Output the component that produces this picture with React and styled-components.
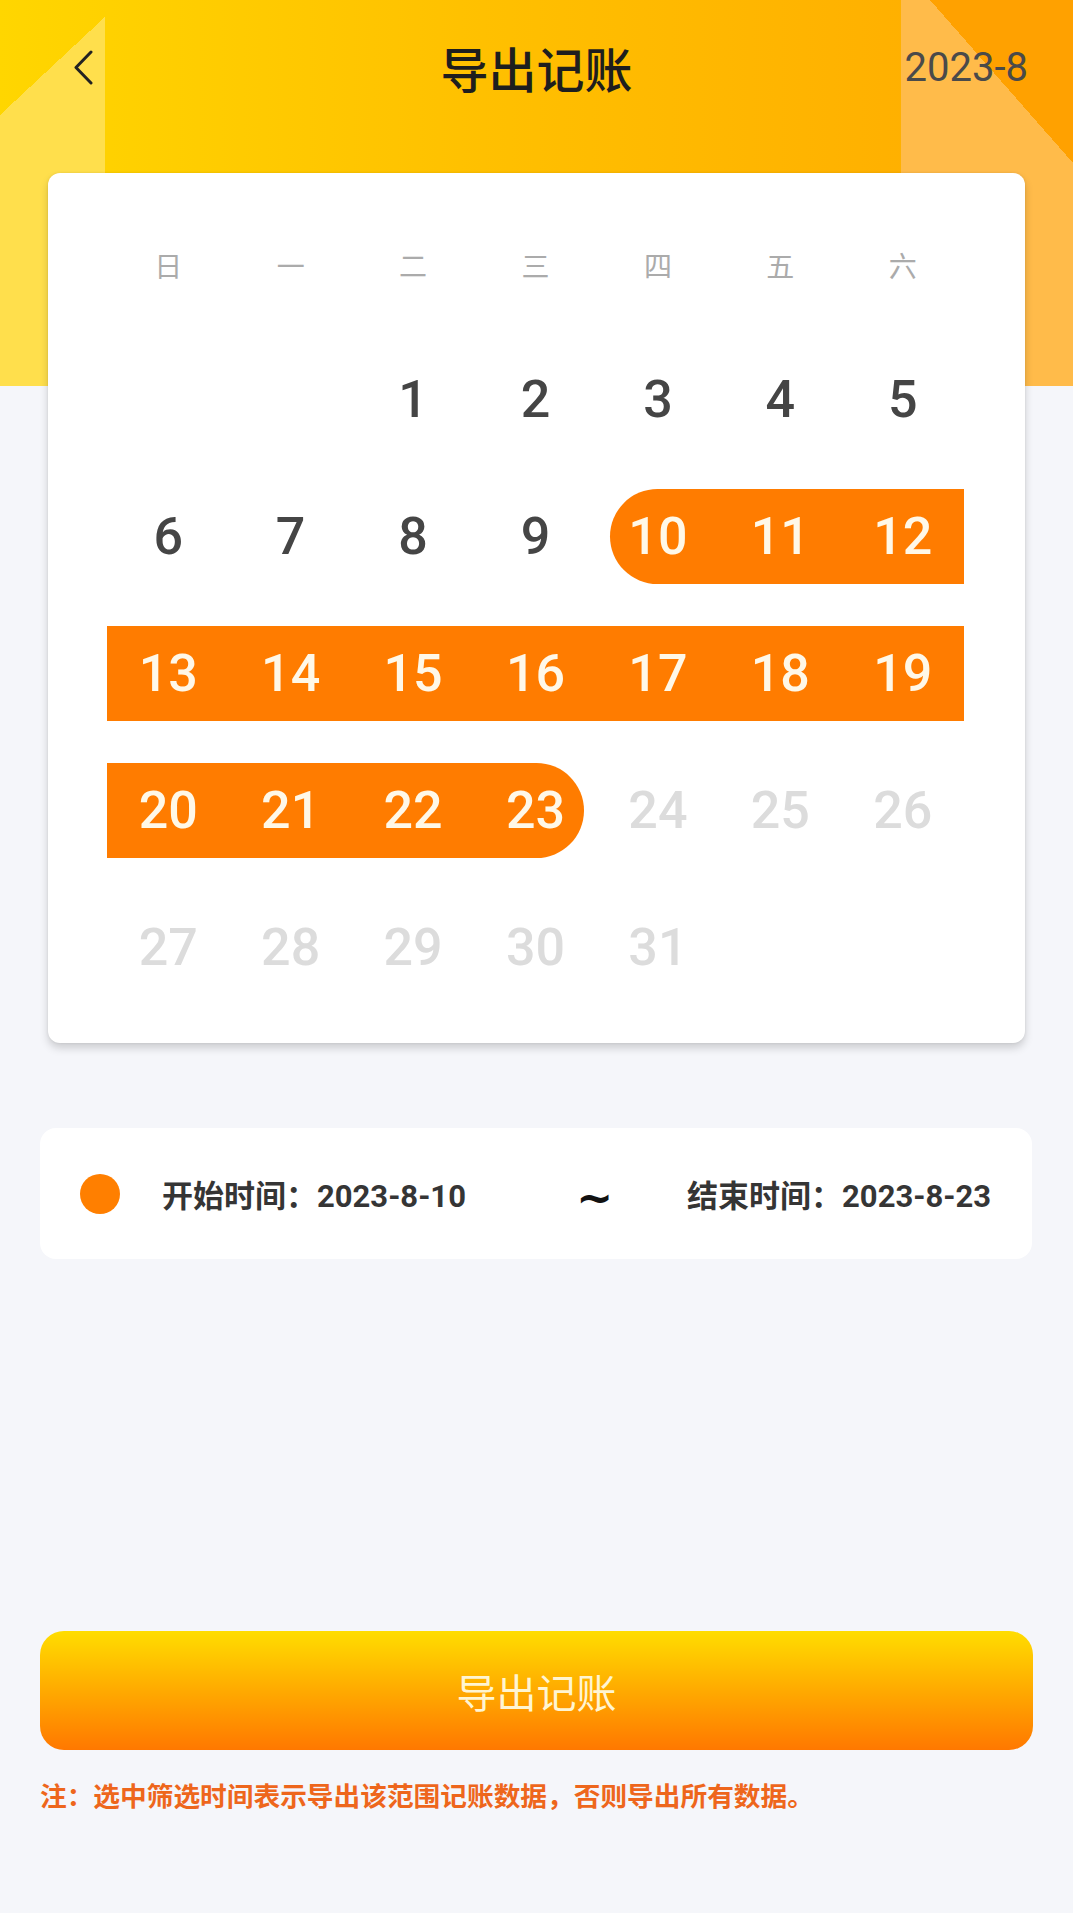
import React from 'react';
import styled, { createGlobalStyle } from 'styled-components';

const GlobalStyle = createGlobalStyle`
  html, body {
    margin: 0;
    padding: 0;
    background: #f5f6fa;
  }
  body {
    font-family: Roboto, "Noto Sans CJK SC", sans-serif;
  }
  * {
    box-sizing: border-box;
  }
`;

const Screen = styled.div`
  min-height: 1913px;
  padding-bottom: 60px;
  background:
    linear-gradient(to top right, transparent 50%, #ffa100 50%) right 0 top 0 / 143px 163px no-repeat,
    linear-gradient(#ffbb4a, #ffbb4a) right 0 top 0 / 172px 386px no-repeat,
    linear-gradient(to bottom right, transparent 50%, #ffdf4c 50%) 0 17px / 105px 98px no-repeat,
    linear-gradient(#ffdf4c, #ffdf4c) 0 115px / 105px 271px no-repeat,
    linear-gradient(90deg, #ffd600 0%, #ffc000 45%, #ffaa00 100%) 0 0 / 100% 386px no-repeat,
    #f5f6fa;
`;

const NavBar = styled.header`
  height: 134px;
  padding: 0 45px;
  display: grid;
  grid-template-columns: 1fr auto 1fr;
  align-items: center;
`;

const BackButton = styled.button`
  justify-self: start;
  margin-left: 28px;
  padding: 0;
  border: 0;
  background: none;
  display: flex;
  align-items: center;
  cursor: pointer;
`;

const Title = styled.h1`
  margin: 0;
  font-size: 48px;
  font-weight: 500;
  color: #1e1e1e;
`;

const MonthLabel = styled.span`
  justify-self: end;
  font-size: 40px;
  color: #4a4a4a;
`;

const CalendarCard = styled.section`
  margin: 39px 48px 0;
  padding: 62px 61px 48px 59px;
  background: #fff;
  border-radius: 12px;
  box-shadow: 0 5px 8px rgba(0, 0, 0, 0.17), 0 0 3px rgba(0, 0, 0, 0.08);
`;

const WeekRow = styled.div`
  display: grid;
  grid-template-columns: repeat(7, 1fr);
  height: 60px;
  margin-bottom: 57px;
`;

const WeekDay = styled.span`
  display: flex;
  align-items: center;
  justify-content: center;
  font-size: 28px;
  color: #ababab;
`;

const DayGrid = styled.div`
  display: grid;
  grid-template-columns: repeat(7, 1fr);
  grid-auto-rows: 95px;
  row-gap: 42px;
`;

const DayCell = styled.div`
  position: relative;
  display: flex;
  align-items: center;
  justify-content: center;
  font-size: 52px;
  font-weight: 500;
  color: ${({ $inRange, $muted }) => ($inRange ? '#fff8e8' : $muted ? '#dcdcdc' : '#454545')};

  &::before {
    content: '';
    display: ${({ $inRange }) => ($inRange ? 'block' : 'none')};
    position: absolute;
    top: 0;
    bottom: 0;
    left: ${({ $isStart }) => ($isStart ? '13px' : '0')};
    right: ${({ $isEnd }) => ($isEnd ? '13px' : '0')};
    background: #ff7c00;
    border-radius: ${({ $isStart, $isEnd }) =>
      `${$isStart ? '48px' : '0'} ${$isEnd ? '48px' : '0'} ${$isEnd ? '48px' : '0'} ${$isStart ? '48px' : '0'}`};
  }

  span {
    position: relative;
  }
`;

const RangeBox = styled.div`
  margin: 85px 41px 0 40px;
  height: 131px;
  padding: 0 41px 0 40px;
  display: flex;
  align-items: center;
  background: #fff;
  border-radius: 16px;
`;

const Dot = styled.span`
  width: 40px;
  height: 40px;
  border-radius: 50%;
  background: #ff7f00;
  flex-shrink: 0;
`;

const RangeText = styled.span`
  margin-left: ${({ $first }) => ($first ? '42px' : '0')};
  font-size: 31px;
  font-weight: 700;
  color: #353535;
  white-space: nowrap;
`;

const Tilde = styled.span`
  margin: 0 74px 0 auto;
  font-family: "DejaVu Sans", sans-serif;
  font-size: 44px;
  font-weight: 700;
  line-height: 1;
  color: #111;
  transform: translateY(4px);
`;

const ExportButton = styled.button`
  display: flex;
  align-items: center;
  justify-content: center;
  width: calc(100% - 80px);
  height: 119px;
  margin: 372px 40px 0;
  border: 0;
  border-radius: 24px;
  background: linear-gradient(180deg, #ffdd00 0%, #ffaa00 50%, #ff7800 100%);
  font-family: inherit;
  font-size: 40px;
  color: #fff5d2;
  cursor: pointer;
`;

const Note = styled.p`
  margin: 32px 40px 0;
  font-size: 26.7px;
  line-height: 31px;
  font-weight: 700;
  color: #ee661c;
`;

const weekDays = ['日', '一', '二', '三', '四', '五', '六'];
const firstWeekday = 2;
const daysInMonth = 31;
const rangeStart = 10;
const rangeEnd = 23;
const lastRecorded = 23;

const ChevronLeft = () => (
  <svg width="20" height="35" viewBox="0 0 20 35" fill="none">
    <polyline
      points="18,2 3,17.5 18,33"
      stroke="#222"
      strokeWidth="3"
      strokeLinecap="round"
      strokeLinejoin="round"
    />
  </svg>
);

const App = () => {
  const cells = [];
  for (let i = 0; i < firstWeekday; i++) cells.push(null);
  for (let d = 1; d <= daysInMonth; d++) cells.push(d);

  return (
    <>
      <GlobalStyle />
      <Screen>
        <NavBar>
          <BackButton aria-label="返回">
            <ChevronLeft />
          </BackButton>
          <Title>导出记账</Title>
          <MonthLabel>2023-8</MonthLabel>
        </NavBar>

        <CalendarCard>
          <WeekRow>
            {weekDays.map((w) => (
              <WeekDay key={w}>{w}</WeekDay>
            ))}
          </WeekRow>
          <DayGrid>
            {cells.map((d, i) =>
              d === null ? (
                <DayCell key={`e${i}`} />
              ) : (
                <DayCell
                  key={d}
                  $inRange={d >= rangeStart && d <= rangeEnd}
                  $isStart={d === rangeStart}
                  $isEnd={d === rangeEnd}
                  $muted={d > lastRecorded}
                >
                  <span>{d}</span>
                </DayCell>
              )
            )}
          </DayGrid>
        </CalendarCard>

        <RangeBox>
          <Dot />
          <RangeText $first>开始时间：2023-8-10</RangeText>
          <Tilde>~</Tilde>
          <RangeText>结束时间：2023-8-23</RangeText>
        </RangeBox>

        <ExportButton>导出记账</ExportButton>
        <Note>注：选中筛选时间表示导出该范围记账数据，否则导出所有数据。</Note>
      </Screen>
    </>
  );
};

export default App;
